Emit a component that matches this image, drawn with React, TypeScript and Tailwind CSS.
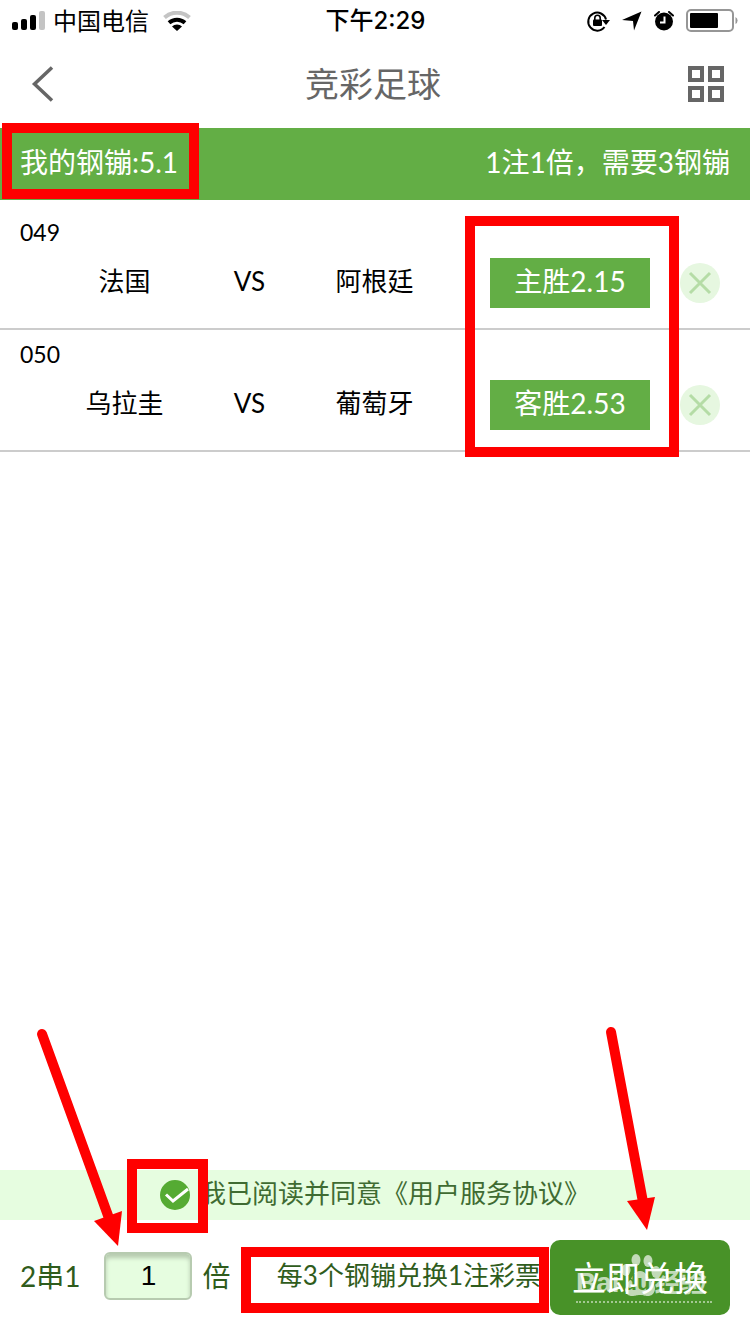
import React, { useState } from 'react';
import clsx from 'clsx';

interface Match {
  id: string;
  home: string;
  away: string;
  pick: string;
}

const matches: Match[] = [
  { id: '049', home: '法国', away: '阿根廷', pick: '主胜2.15' },
  { id: '050', home: '乌拉圭', away: '葡萄牙', pick: '客胜2.53' },
];

const Highlight: React.FC<{ className: string }> = ({ className }) => (
  <div className={clsx('absolute border-[10px] border-[#ff0000] pointer-events-none', className)} />
);

const StatusBar: React.FC = () => (
  <div className="grid grid-cols-3 items-center h-10 pl-3 pr-[11px] pt-[2px] text-black text-2xl">
    <div className="flex items-center">
      <svg className="w-[34px] h-5" viewBox="0 0 34 20">
        <rect x="0" y="11" width="6" height="8" rx="2" />
        <rect x="9" y="8" width="6" height="11" rx="2" />
        <rect x="18" y="4" width="6" height="15" rx="2" />
        <rect x="27" y="0" width="6" height="19" rx="2" fill="#c4c4c4" />
      </svg>
      <span className="ml-[7px] leading-8">中国电信</span>
      <svg className="w-7 h-5 ml-[14px]" viewBox="0 0 28 20">
        <path d="M1.500 6.500a18.500 18.500 0 0 1 25 0" fill="none" stroke="#c4c4c4" strokeWidth="4" />
        <path d="M6 11.800a12 12 0 0 1 16 0" fill="none" stroke="#000" strokeWidth="4" />
        <path d="M9 15.500a7 7 0 0 1 10 0L14 20z" />
      </svg>
    </div>
    <div className="text-center font-medium leading-8 font-['Inter','Noto_Sans_CJK_SC',sans-serif]">
      下午2:29
    </div>
    <div className="flex items-center justify-end pb-px">
      <svg className="w-6 h-6" viewBox="0 0 24 24">
        <path d="M18.500 18A9 9 0 1 1 20 10.500" fill="none" stroke="#000" strokeWidth="2" />
        <path d="M16 11h8l-4 5z" />
        <rect x="7" y="10.500" width="9" height="6.500" rx="1" />
        <path d="M8.800 11V9a2.700 2.700 0 0 1 5.400 0v2" fill="none" stroke="#000" strokeWidth="1.600" />
      </svg>
      <svg className="w-5 h-5 ml-3" viewBox="0 0 20 20">
        <path d="M19.500 0.500L12 19.500L11 10L0 9z" />
      </svg>
      <svg className="w-5 h-5 ml-3" viewBox="0 0 20 20">
        <circle cx="10" cy="10.500" r="9" />
        <path d="M1 4.500L5 1M19 4.500L15 1" stroke="#000" strokeWidth="2" strokeLinecap="round" />
        <path d="M10.500 5.500V11.500H6" fill="none" stroke="#fff" strokeWidth="2" />
      </svg>
      <svg className="w-[53px] h-6 ml-3" viewBox="0 0 53 24">
        <rect x="1" y="1" width="46" height="21" rx="4" fill="none" stroke="#969696" strokeWidth="2" />
        <rect x="4" y="4" width="28" height="15" rx="1" />
        <path d="M49.500 8a4 4 0 0 1 0 7z" fill="#969696" />
      </svg>
    </div>
  </div>
);

const NavBar: React.FC = () => (
  <header className="flex items-center justify-between h-[88px] pl-5 pr-[26px] text-[#666]">
    <button aria-label="返回">
      <svg className="w-[38px] h-9" viewBox="0 0 38 36">
        <path d="M32 1.500L14.500 18L32 34.500" fill="none" stroke="currentColor" strokeWidth="3.500" />
      </svg>
    </button>
    <h1 className="text-[34px] leading-10">竞彩足球</h1>
    <button aria-label="菜单">
      <svg className="w-9 h-9" viewBox="0 0 36 36" fill="none" stroke="currentColor" strokeWidth="4">
        <rect x="2" y="2" width="12" height="12" />
        <rect x="22" y="2" width="12" height="12" />
        <rect x="2" y="22" width="12" height="12" />
        <rect x="22" y="22" width="12" height="12" />
      </svg>
    </button>
  </header>
);

const MatchRow: React.FC<{ match: Match }> = ({ match }) => (
  <li className="border-b-2 border-[#ccc] pt-2 pb-5">
    <div className="pl-5 text-[23px] leading-8">{match.id}</div>
    <div className="flex items-center pr-[30px] mt-[10px]">
      <div className="flex-1 grid grid-cols-3 pl-[62px] pr-[53px] pb-1 text-center text-[26px] leading-9">
        <span>{match.home}</span>
        <span>VS</span>
        <span>{match.away}</span>
      </div>
      <button className="w-40 h-[50px] pb-1 bg-[#63ae45] text-white text-[28px] leading-9">
        {match.pick}
      </button>
      <button aria-label="删除" className="ml-[30px] w-10 h-10 rounded-full bg-[#e6f7e0] flex items-center justify-center">
        <svg className="w-6 h-6" viewBox="0 0 24 24">
          <path d="M2 2L22 22M22 2L2 22" stroke="#b5dca6" strokeWidth="3" />
        </svg>
      </button>
    </div>
  </li>
);

const Watermark: React.FC = () => (
  <div className="absolute left-[26px] top-3 w-[136px] text-[#c2dab8] text-left pointer-events-none">
    <svg className="absolute left-[44px] top-0 w-10 h-[46px]" viewBox="0 0 40 46" fill="currentColor">
      <ellipse cx="16" cy="8" rx="4.500" ry="6" />
      <ellipse cx="28" cy="9" rx="4.500" ry="6" />
      <ellipse cx="6" cy="18" rx="4.500" ry="6" />
      <ellipse cx="36" cy="20" rx="4.500" ry="6" />
      <path d="M20 19c6 0 7 6 11 10c7 6 4 15-3 15c-4 0-4-1-8-1s-4 1-8 1c-7 0-10-9-3-15c4-4 5-10 11-10z" />
    </svg>
    <div className="relative flex pt-[15px] font-bold leading-8 whitespace-nowrap font-['Liberation_Sans','Noto_Sans_CJK_SC',sans-serif]">
      <span className="text-[28px]">Bai</span>
      <span className="text-[22px] text-[#489228] ml-1">du</span>
      <span className="text-[26px] ml-1">经验</span>
    </div>
    <div className="mt-[2px] border-b-2 border-dotted border-[#a3c893]" />
  </div>
);

const App: React.FC = () => {
  const [agreed, setAgreed] = useState(true);
  const [times, setTimes] = useState('1');

  return (
    <div className="min-h-screen flex flex-col bg-white text-black overflow-hidden font-['Lato','Noto_Sans_CJK_SC',sans-serif]">
      <StatusBar />
      <NavBar />

      <div className="relative flex items-center justify-between h-[72px] px-5 pb-1 bg-[#63ae45] text-white text-[28px] leading-10">
        <span>我的钢镚:5.1</span>
        <span>1注1倍，需要3钢镚</span>
        <Highlight className="left-[2px] top-[-5px] w-[197px] h-[76px]" />
      </div>

      <main className="relative flex-1 pt-2">
        <ul>
          {matches.map(match => (
            <MatchRow key={match.id} match={match} />
          ))}
        </ul>
        <Highlight className="right-[71px] top-4 w-[214px] h-[241px]" />
      </main>

      <footer className="relative text-[#2f5c1c]">
        <div className="flex items-center justify-center gap-[10px] h-[50px] bg-[#e6fde0] text-[26px] leading-9 text-[#3f6b32]">
          <div className="relative w-[30px] h-[30px]">
            <input
              id="agree"
              type="checkbox"
              checked={agreed}
              onChange={e => setAgreed(e.target.checked)}
              className="block appearance-none w-[30px] h-[30px] rounded-full border-2 border-[#55ab33] checked:bg-[#55ab33]"
            />
            {agreed && (
              <svg className="absolute inset-0 w-[30px] h-[30px] pointer-events-none" viewBox="0 0 30 30">
                <path d="M6 14.500L13 21L28 9" fill="none" stroke="#fff" strokeWidth="3" />
              </svg>
            )}
            <Highlight className="left-[-33px] top-[-21px] w-[81px] h-[74px] z-10" />
          </div>
          <span className="pb-1">
            <label htmlFor="agree">我已阅读并同意</label>
            <a href="#agreement">《用户服务协议》</a>
          </span>
        </div>

        <div className="flex items-center px-5 pt-5 pb-[19px]">
          <div className="flex flex-1 items-center pb-1 text-[28px] leading-10">
            <label htmlFor="times">2串1</label>
            <input
              id="times"
              value={times}
              onChange={e => setTimes(e.target.value)}
              className="ml-6 w-[88px] h-12 rounded-md border-2 border-[#b7cbb0] bg-[#e6fde0] text-center text-[28px] text-black shadow-[inset_0_4px_4px_#b7cbb0] font-['Liberation_Sans',sans-serif]"
            />
            <span className="ml-[10px]">倍</span>
            <div className="relative ml-auto mr-[9px] pb-[2px] text-[26px] leading-9 whitespace-nowrap">
              每3个钢镚兑换1注彩票
              <Highlight className="right-[-8px] top-[-10px] w-[308px] h-[66px]" />
            </div>
          </div>
          <button className="relative w-[180px] h-[75px] rounded-[10px] bg-[#489228] text-white text-[34px] leading-10">
            <Watermark />
            <span className="relative">立即兑换</span>
          </button>
        </div>

        <svg className="absolute left-[30px] bottom-[86px] w-[100px] h-[222px] pointer-events-none" viewBox="0 0 100 222" fill="#ff0000">
          <path d="M12 8L80 195" stroke="#ff0000" strokeWidth="10" strokeLinecap="round" />
          <path d="M64 195L92 185L88 220z" />
        </svg>
        <svg className="absolute right-[90px] bottom-[102px] w-[60px] h-[210px] pointer-events-none" viewBox="0 0 60 210" fill="#ff0000">
          <path d="M11 10L43 180" stroke="#ff0000" strokeWidth="10" strokeLinecap="round" />
          <path d="M27 179L55 175L47 208z" />
        </svg>
      </footer>
    </div>
  );
};

export default App;
